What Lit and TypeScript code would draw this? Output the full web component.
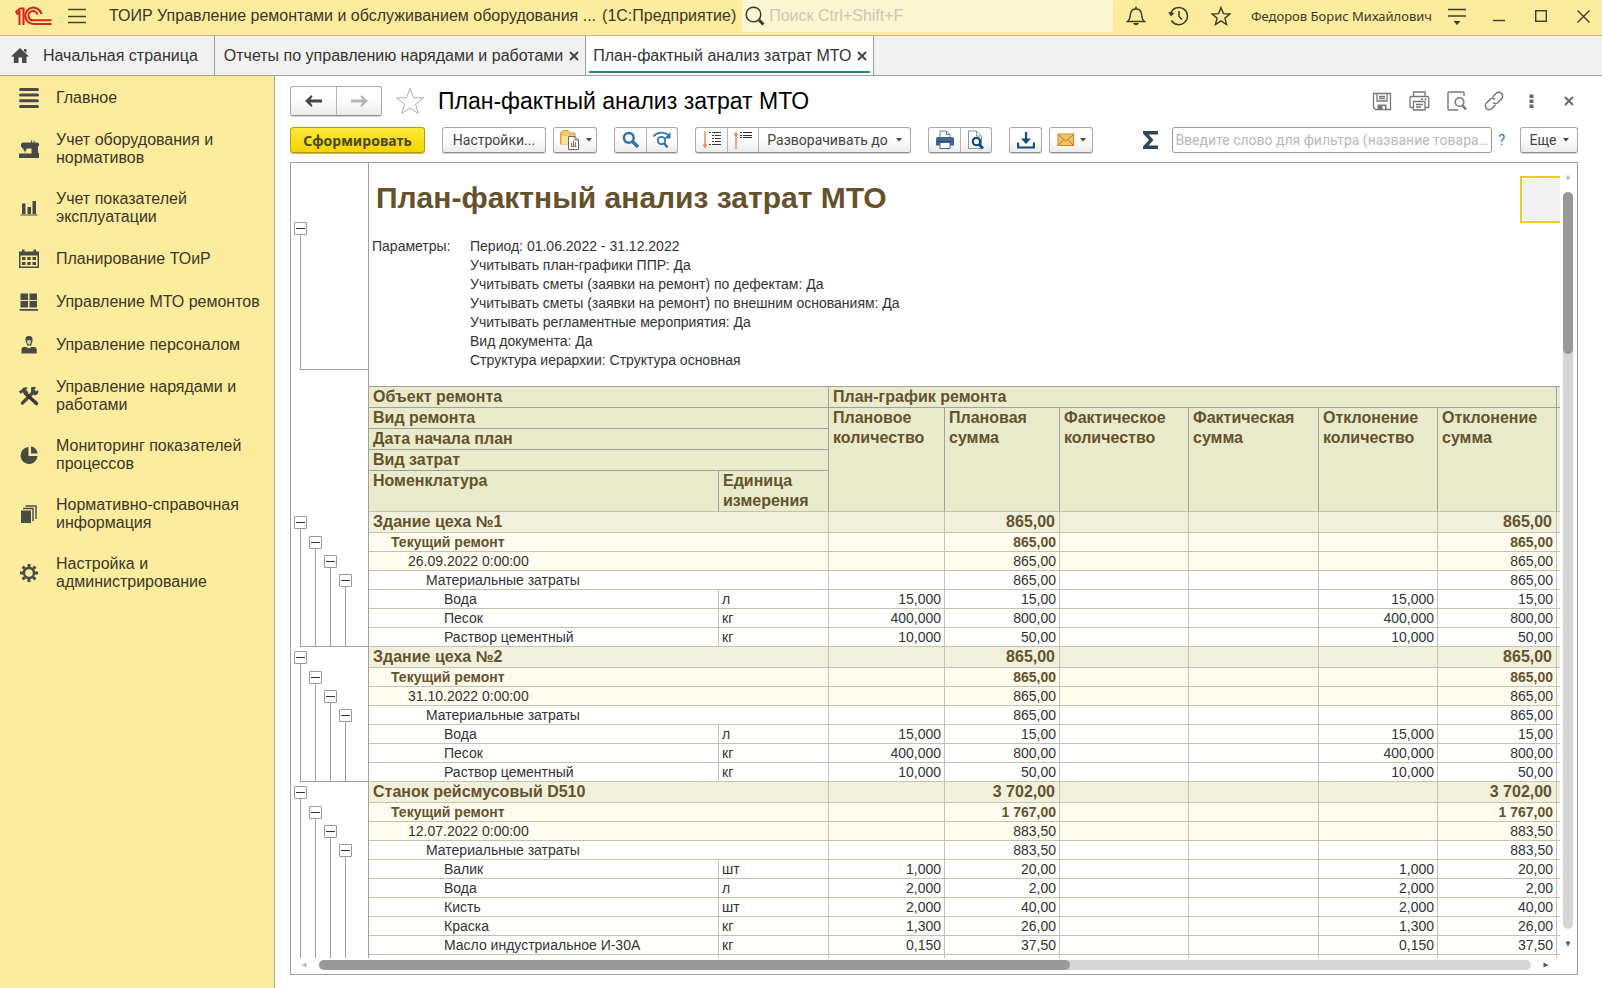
import { LitElement, html, css, svg, nothing, type TemplateResult } from "lit";
import { customElement, property } from "lit/decorators.js";
import { classMap } from "lit/directives/class-map.js";

type Row = { level: number; name: string; unit?: string; qty?: string; sum: string; last?: boolean };

const NAV: { icon: string; label: string }[] = [
  { icon: "main", label: "Главное" },
  { icon: "machine", label: "Учет оборудования и нормативов" },
  { icon: "bars", label: "Учет показателей эксплуатации" },
  { icon: "calendar", label: "Планирование ТОиР" },
  { icon: "blocks", label: "Управление МТО ремонтов" },
  { icon: "person", label: "Управление персоналом" },
  { icon: "tools", label: "Управление нарядами и работами" },
  { icon: "pie", label: "Мониторинг показателей процессов" },
  { icon: "books", label: "Нормативно-справочная информация" },
  { icon: "gear", label: "Настройка и администрирование" },
];

const PARAMS = [
  "Период: 01.06.2022 - 31.12.2022",
  "Учитывать план-графики ППР: Да",
  "Учитывать сметы (заявки на ремонт) по дефектам: Да",
  "Учитывать сметы (заявки на ремонт) по внешним основаниям: Да",
  "Учитывать регламентные мероприятия: Да",
  "Вид документа: Да",
  "Структура иерархии: Структура основная",
];

const MEASURES = [
  ["Плановое", "количество"],
  ["Плановая", "сумма"],
  ["Фактическое", "количество"],
  ["Фактическая", "сумма"],
  ["Отклонение", "количество"],
  ["Отклонение", "сумма"],
];

const building = (name: string, date: string): Row[] => [
  { level: 1, name, sum: "865,00" },
  { level: 2, name: "Текущий ремонт", sum: "865,00" },
  { level: 3, name: date, sum: "865,00" },
  { level: 4, name: "Материальные затраты", sum: "865,00" },
  { level: 5, name: "Вода", unit: "л", qty: "15,000", sum: "15,00" },
  { level: 5, name: "Песок", unit: "кг", qty: "400,000", sum: "800,00" },
  { level: 5, name: "Раствор цементный", unit: "кг", qty: "10,000", sum: "50,00", last: true },
];

const ROWS: Row[] = [
  ...building("Здание цеха №1", "26.09.2022 0:00:00"),
  ...building("Здание цеха №2", "31.10.2022 0:00:00"),
  { level: 1, name: "Станок рейсмусовый D510", sum: "3 702,00" },
  { level: 2, name: "Текущий ремонт", sum: "1 767,00" },
  { level: 3, name: "12.07.2022 0:00:00", sum: "883,50" },
  { level: 4, name: "Материальные затраты", sum: "883,50" },
  { level: 5, name: "Валик", unit: "шт", qty: "1,000", sum: "20,00" },
  { level: 5, name: "Вода", unit: "л", qty: "2,000", sum: "2,00" },
  { level: 5, name: "Кисть", unit: "шт", qty: "2,000", sum: "40,00" },
  { level: 5, name: "Краска", unit: "кг", qty: "1,300", sum: "26,00" },
  { level: 5, name: "Масло индустриальное И-30А", unit: "кг", qty: "0,150", sum: "37,50" },
  { level: 5, name: "", unit: " ", sum: "" },
];

const GLYPHS: Record<string, { w: number; h: number; body: TemplateResult }> = {
  logo: {
    w: 37, h: 20,
    body: svg`<g fill="none" stroke="#d8261c" stroke-width="2.100">
      <path d="M.500 6.500L5 2.500H8.500V19M1.500 8.500L4.500 6V19"/>
      <path d="M26.500 8A8.200 8.200 0 1 0 18.500 18H36.500"/>
      <path d="M22.500 8.500A4.600 4.600 0 1 0 18.500 14.300H36.500"/>
      </g>`,
  },
  burger: { w: 18, h: 16, body: svg`<path d="M0 1.500H18M0 8.500H18M0 14.500H18" stroke="#4b4528" stroke-width="1.400"/>` },
  find: {
    w: 20, h: 20,
    body: svg`<circle cx="8.500" cy="8.500" r="7.300" fill="none" stroke="#3f3a28" stroke-width="1.500"/><path d="M14 14L18.500 18.500" stroke="#3f3a28" stroke-width="3"/>`,
  },
  bell: {
    w: 20, h: 20,
    body: svg`<path d="M1.500 15.500C4.500 13.500 4 10 4.600 7.500C5.200 4.600 7.500 3 10 3S14.800 4.600 15.400 7.500C16 10 15.500 13.500 18.500 15.500Z" fill="none" stroke="#3f3a28" stroke-width="1.400"/><path d="M10 0.500V3" stroke="#3f3a28" stroke-width="1.600"/><path d="M7 17H13L11.500 19H8.500Z" fill="#3f3a28"/>`,
  },
  history: {
    w: 21, h: 20,
    body: svg`<path d="M2.800 7A8.600 8.600 0 1 1 3.500 14.500" fill="none" stroke="#3f3a28" stroke-width="1.500"/><path d="M0 6L6.500 7L3 10.500Z" fill="#3f3a28"/><path d="M11 5V10.500L14 13.500" fill="none" stroke="#3f3a28" stroke-width="1.500"/>`,
  },
  star: {
    w: 20, h: 20,
    body: svg`<path d="M10 1.500L12.400 7.600L19 8L13.900 12.100L15.600 18.500L10 14.900L4.400 18.500L6.100 12.100L1 8L7.600 7.600Z" fill="none" stroke="#3f3a28" stroke-width="1.400"/>`,
  },
  sortMenu: { w: 20, h: 17, body: svg`<path d="M1 1.500H19M1 8H19" stroke="#3f3a28" stroke-width="1.500"/><path d="M6.500 13H13.500L10 17Z" fill="#3f3a28"/>` },
  minimize: { w: 12, h: 12, body: svg`<path d="M0 10.500H12" stroke="#3f3a28" stroke-width="1.400"/>` },
  maximize: { w: 12, h: 12, body: svg`<rect x=".700" y=".700" width="10.600" height="10.600" fill="none" stroke="#3f3a28" stroke-width="1.400"/>` },
  closeWin: { w: 13, h: 13, body: svg`<path d="M.500 .500L12.500 12.500M12.500 .500L.500 12.500" stroke="#3f3a28" stroke-width="1.400"/>` },
  home: { w: 18, h: 15, body: svg`<path d="M9 0L18 8.500H15.500V15H11V9.500H7.500V15H2.800V8.500H0Z" fill="#4a4a4a"/><path d="M13 1H15.500V5L13 3Z" fill="#4a4a4a"/>` },
  cross: { w: 10, h: 10, body: svg`<path d="M1 1L9 9M9 1L1 9" stroke="#444" stroke-width="1.900"/>` },
  crossThin: { w: 10, h: 10, body: svg`<path d="M1 1L9 9M9 1L1 9" stroke="#666" stroke-width="1.800"/>` },
  back: { w: 18, h: 12, body: svg`<path d="M0 6L6.500 0L7.500 1.500L5.500 4.600H17V7.400H5.500L7.500 10.500L6.500 12Z" fill="#484848"/>` },
  forward: { w: 18, h: 12, body: svg`<path d="M18 6L11.500 0L10.500 1.500L12.500 4.600H1V7.400H12.500L10.500 10.500L11.500 12Z" fill="#b4b4b4"/>` },
  favorite: { w: 30, h: 28, body: svg`<path d="M15 1.500L18.400 10.600L28.500 11L20.500 17L23.300 26.500L15 21L6.700 26.500L9.500 17L1.500 11L11.600 10.600Z" fill="#fff" stroke="#a9aeb2"/>` },
  save: {
    w: 20, h: 19,
    body: svg`<g fill="none" stroke="#777" stroke-width="1.300"><path d="M2 1.500H18.500V17.500H3.500L1.500 15.500V1.500Z"/><path d="M5 2V9H15V2M7 4.500H13M7 6.500H13"/></g><path d="M5.500 12.500H14.500V17.500H5.500Z" fill="#777"/><path d="M10.500 14H13V17H10.500Z" fill="#fff"/>`,
  },
  print: {
    w: 21, h: 20,
    body: svg`<g fill="none" stroke="#777" stroke-width="1.300"><path d="M4.500 5.500V1H16V5.500M4.500 16.500H1.500Q1 16.500 1 15.500V7Q1 5.500 2.500 5.500H18Q19.800 5.500 19.800 7V15.500Q19.800 16.500 19 16.500H16"/><path d="M4.500 10.500H16V19H4.500ZM7 13.500H14M7 16H12"/></g><path d="M12 7.500H14V9H12ZM15.500 7.500H17.500V9H15.500Z" fill="#777"/>`,
  },
  preview: {
    w: 20, h: 20,
    body: svg`<path d="M17 5V2Q17 1 16 1H2Q1 1 1 2V18Q1 19 2 19H11" fill="none" stroke="#777" stroke-width="1.400"/><circle cx="12.500" cy="11" r="4.300" fill="none" stroke="#777" stroke-width="1.600"/><path d="M15.500 14.500L19 18.500" stroke="#777" stroke-width="2.600"/>`,
  },
  link: {
    w: 20, h: 20,
    body: svg`<g fill="none" stroke="#777" stroke-width="1.500" stroke-linecap="round"><path d="M9 5.500L12 2.500A3.700 3.700 0 0 1 17.500 8L14 11.500A3.600 3.600 0 0 1 9.500 12"/><path d="M11 14.500L8 17.500A3.700 3.700 0 0 1 2.500 12L6 8.500A3.600 3.600 0 0 1 10.500 8"/></g>`,
  },
  dots: { w: 5, h: 15, body: svg`<path d="M.500 .500H4.500V4H.500ZM.500 5.500H4.500V9H.500ZM.500 10.500H4.500V14H.500Z" fill="#6a6a6a"/>` },
  folder: {
    w: 22, h: 22,
    body: svg`<path d="M1.500 6V4L4 1.500H9L11 4H16V15H1.500Z" fill="#f4c667" stroke="#d9a03c"/><path d="M3 7H15V15H3Z" fill="#fbe09a"/><path d="M9.500 7.500H16L19.500 11V20.500H9.500Z" fill="#fff" stroke="#666"/><path d="M16 7.500V11H19.500" fill="none" stroke="#666"/><path d="M12.500 17V14M14.500 17V11.500" stroke="#cf4a3c"/><path d="M12 17.500H17.500M16.500 17V13" stroke="#777"/>`,
  },
  search: { w: 18, h: 18, body: svg`<circle cx="6.800" cy="6.800" r="4.900" fill="none" stroke="#2c74a8" stroke-width="2.500"/><path d="M10.500 10.500L16 16" stroke="#2c74a8" stroke-width="3.400"/>` },
  searchNext: {
    w: 20, h: 18,
    body: svg`<circle cx="9.500" cy="9.500" r="3.700" fill="none" stroke="#2c74a8" stroke-width="1.800"/><path d="M12 12L15.500 16.500" stroke="#2c74a8" stroke-width="2.400"/><path d="M1.500 5.500C5 .800 12 .500 16.500 4" fill="none" stroke="#2c74a8" stroke-width="1.900"/><path d="M18.500 1V7.500H12.500Z" fill="#2c74a8"/>`,
  },
  expand: {
    w: 20, h: 20,
    body: svg`<path d="M3 1V17" stroke="#e8834f" stroke-width="1.400"/><path d="M.500 14.500H5.500L3 18.500Z" fill="#e8834f"/><path d="M7 2.500H9M10 2.500H19M10 5.500H12M13 5.500H19M10 8.500H12M13 8.500H19M10 11.500H12M13 11.500H19M7 14.500H9M10 14.500H19" stroke="#3a3a3a"/>`,
  },
  collapse: {
    w: 20, h: 20,
    body: svg`<path d="M3 3V19" stroke="#e8834f" stroke-width="1.400"/><path d="M.500 5.500H5.500L3 1.500Z" fill="#e8834f"/><path d="M7 2.500H9M10 2.500H19M7 5.500H9M10 5.500H19M7 7.500H9M10 7.500H19" stroke="#2a2a2a" stroke-width="1.200"/>`,
  },
  printer: {
    w: 20, h: 20,
    body: svg`<path d="M5 7V1H11.500L15 4.500V7" fill="#fff" stroke="#6a7f92"/><path d="M11.500 1V4.500H15" fill="none" stroke="#6a7f92"/><path d="M3 7H17Q19 7 19 9V15.500H1V9Q1 7 3 7Z" fill="#406890"/><path d="M2 11.500H18" stroke="#27496b"/><path d="M5 12.500H15V18.500H5Z" fill="#fff" stroke="#406890"/>`,
  },
  pageFind: {
    w: 18, h: 20,
    body: svg`<path d="M1.500 1H9.500L14.500 6V18.500H1.500Z" fill="#fff" stroke="#8297a8"/><path d="M9.500 1V6H14.500" fill="none" stroke="#8297a8"/><circle cx="9.500" cy="11.500" r="3.700" fill="#fff" stroke="#0d4f78" stroke-width="2.200"/><path d="M12 14.500L16 18.500" stroke="#0d4f78" stroke-width="3"/>`,
  },
  download: { w: 18, h: 17, body: svg`<path d="M9 0V9" stroke="#0d4f78" stroke-width="2.200"/><path d="M4 6.500H14L9 12Z" fill="#0d4f78"/><path d="M1 10.500V15.500H17V10.500" fill="none" stroke="#0d4f78" stroke-width="2.200"/>` },
  mail: { w: 18, h: 14, body: svg`<rect x="1" y="1" width="15.500" height="11.500" fill="#f6c264" stroke="#c98a2a"/><path d="M1 1.500L8.800 8L16.500 1.500M1 12.500L6.500 6.500M16.500 12.500L11 6.500" fill="none" stroke="#c07c22"/>` },
  sigma: { w: 15, h: 18, body: svg`<path d="M0 0H15V3.500H5.500L10.500 9L5.500 14.500H15V18H0V15.500L6 9L0 2.500Z" fill="#2d4858"/>` },
  caret: { w: 6, h: 4, body: svg`<path d="M0 0H6L3 3.500Z" fill="#444"/>` },
  up: { w: 6, h: 6, body: svg`<path d="M3 .500L5.500 5.500H.500Z" fill="#bbb"/>` },
  down: { w: 6, h: 6, body: svg`<path d="M3 5.500L.500 .500H5.500Z" fill="#555"/>` },
  left: { w: 6, h: 6, body: svg`<path d="M.500 3L5.500 .500V5.500Z" fill="#bbb"/>` },
  right: { w: 6, h: 6, body: svg`<path d="M5.500 3L.500 .500V5.500Z" fill="#555"/>` },
  minus: { w: 9, h: 9, body: svg`<path d="M0 4.500H9" stroke="#333"/>` },
  main: { w: 20, h: 20, body: svg`<path d="M1.500 1.500H18.500M1.500 7H18.500M1.500 12.800H18.500M1.500 18.500H18.500" stroke="#4a4a44" stroke-width="3" stroke-linecap="round"/>` },
  machine: {
    w: 20, h: 20,
    body: svg`<path d="M4 3.500H12V1.500H13V3.500H14.500V1.500H15.500V3.500H18Q20 3.500 20 5V7H19V14H20V19H0V14.500H12.500V9.500H7.500V11.500H6.500V13.500H5.500V11.500H4.500V9.500H3V8H2V5.500Q2 3.500 4 3.500Z" fill="#4a4a44"/>`,
  },
  bars: { w: 20, h: 20, body: svg`<path d="M3 5.500H6.500V16H3ZM8.500 9H12V16H8.500ZM13.500 3H17V16H13.500ZM1.500 16.500H18.500V17.500H1.500Z" fill="#4a4a44"/>` },
  calendar: {
    w: 20, h: 20,
    body: svg`<path d="M0 2.500H20V19H0Z" fill="#4a4a44"/><path d="M3 .500H5.500V3H3ZM14.500 .500H17V3H14.500Z" fill="#4a4a44"/><path d="M1.500 6.500H18.500V17.500H1.500Z" fill="#fcec9e"/><path d="M3 8H6.500V11H3ZM8.300 8H11.700V11H8.300ZM13.500 8H17V11H13.500ZM3 13H6.500V16H3ZM8.300 13H11.700V16H8.300ZM13.500 13H17V16H13.500Z" fill="#4a4a44"/>`,
  },
  blocks: { w: 20, h: 20, body: svg`<path d="M1.500 1.500H9V8H1.500ZM10.500 1.500H18V8H10.500ZM1.500 9H9V15.500H1.500ZM10.500 9H18V15.500H10.500ZM.500 17H19V18.800H.500Z" fill="#4a4a44"/>` },
  person: {
    w: 20, h: 20,
    body: svg`<path d="M6.500 5Q6 1 10 1T13.500 5Q13.500 7.500 12.500 9V10.500L8 10.500V9Q6.500 7.500 6.500 5Z" fill="#4a4a44"/><path d="M2.500 18.500V14.500Q2.500 12 5 12H7.500L10 13.500L12.500 12H15.500Q17.800 12 17.800 14.500V18.500Z" fill="#4a4a44"/><path d="M8 5.500Q10 4.500 12 5.500Q12 9.500 10 9.500T8 5.500Z" fill="#d9cc94"/>`,
  },
  tools: {
    w: 20, h: 20,
    body: svg`<path d="M3.500 17L15 5.500" stroke="#4a4a44" stroke-width="3.400" stroke-linecap="round"/><path d="M12 1.500Q16 0 17 2L14.500 4.500L16 6L19 4Q20 8 17 9T12 6Z" fill="#4a4a44"/><path d="M6 7L17.500 17.500" stroke="#3a352c" stroke-width="3.400" stroke-linecap="round"/><path d="M0 5Q2.500 4.500 3.500 2.500Q6 .500 9 2L7 3.500L9.500 6.500L6.500 9L4.500 6.500Q2.500 6 1.500 8Z" fill="#4a4a44"/>`,
  },
  pie: { w: 20, h: 20, body: svg`<path d="M9.500 2A8.500 8.500 0 1 0 18.500 11H9.500Z" fill="#4a4a44"/><path d="M12 1.500A8 8 0 0 1 18.500 8.500H12Z" fill="#4a4a44"/>` },
  books: { w: 20, h: 20, body: svg`<path d="M2 6.500H12V19H2Z" fill="#4a4a44"/><path d="M4 4.500H14V17M6.500 2H17V15" fill="none" stroke="#4a4a44" stroke-width="1.400"/>` },
  gear: {
    w: 20, h: 20,
    body: svg`<circle cx="10" cy="10" r="5" fill="none" stroke="#4a4a44" stroke-width="2.400"/><path d="M10 1V4M10 16V19M1 10H4M16 10H19M3.600 3.600L5.800 5.800M14.200 14.200L16.400 16.400M16.400 3.600L14.200 5.800M5.800 14.200L3.600 16.400" stroke="#4a4a44" stroke-width="3"/>`,
  },
};

const icon = (name: string) => {
  const g = GLYPHS[name];
  return html`<svg width=${g.w} height=${g.h} viewBox="0 0 ${g.w} ${g.h}" aria-hidden="true">${g.body}</svg>`;
};

const base = css`
  :host, * { box-sizing: border-box; }
  svg { display: block; flex: none; }
  button { margin: 0; padding: 0; border: 0; background: none; font: inherit; color: inherit; display: flex; align-items: center; justify-content: center; cursor: pointer; }
  a { color: inherit; text-decoration: none; }
`;

@customElement("title-bar")
class TitleBar extends LitElement {
  static styles = [base, css`
    :host { display: flex; align-items: center; height: 36px; padding: 0 12px 3px 15px; background: #fcec9e; border-bottom: 1px solid #c9b96c; font-size: 16px; color: #3b3726; white-space: nowrap; }
    .burger { margin: 0 23px 0 16px; }
    .title { margin-right: 6px; }
    .search { flex: 1; align-self: stretch; display: flex; align-items: center; gap: 2px; padding: 0 3px; background: #fdf6d2; border-radius: 0 0 3px 3px; min-width: 0; }
    .search input { flex: 1; min-width: 0; border: 0; padding: 0 2px; background: none; font: inherit; outline: none; }
    .search input::placeholder { color: #cfc8b4; opacity: 1; }
    .tools { display: flex; align-items: center; gap: 22px; padding: 0 20px 0 13px; }
    .user { font-family: "Noto Sans", sans-serif; font-size: 13px; }
    .window { display: flex; align-items: center; gap: 30px; padding-left: 26px; }
    .menu { margin-left: 15px; }
  `];

  render() {
    return html`
      ${icon("logo")}
      <button class="burger" aria-label="Меню">${icon("burger")}</button>
      <span class="title">ТОИР Управление ремонтами и обслуживанием оборудования ...</span>
      <span class="title">(1С:Предприятие)</span>
      <label class="search">${icon("find")}<input type="search" aria-label="Поиск" placeholder="Поиск Ctrl+Shift+F" /></label>
      <div class="tools">
        <button aria-label="Уведомления">${icon("bell")}</button>
        <button aria-label="История">${icon("history")}</button>
        <button aria-label="Избранное">${icon("star")}</button>
      </div>
      <a class="user" href="#user">Федоров Борис Михайлович</a>
      <button class="menu" aria-label="Настройки окна">${icon("sortMenu")}</button>
      <div class="window">
        <button aria-label="Свернуть">${icon("minimize")}</button>
        <button aria-label="Развернуть">${icon("maximize")}</button>
        <button aria-label="Закрыть">${icon("closeWin")}</button>
      </div>
    `;
  }
}

@customElement("tab-strip")
class TabStrip extends LitElement {
  static styles = [base, css`
    :host { display: flex; height: 40px; background: #f1f1f1; border-bottom: 1px solid #a0a0a0; font-size: 16px; color: #333; white-space: nowrap; }
    .tab { display: flex; align-items: center; gap: 6px; padding: 0 6px 0 9px; border-right: 1px solid #a0a0a0; }
    .home { gap: 14px; padding: 0 16px 0 11px; }
    .active { background: #fff; padding: 0 3px; }
    .inner { display: flex; align-items: center; gap: 6px; align-self: stretch; padding: 4px 3px 0 4px; margin-bottom: 2px; border-bottom: 2px solid #1d9060; }
  `];

  render() {
    return html`
      <a class="tab home" href="#home">${icon("home")}<span>Начальная страница</span></a>
      <div class="tab">
        <a href="#reports">Отчеты по управлению нарядами и работами</a>
        <button aria-label="Закрыть вкладку">${icon("cross")}</button>
      </div>
      <div class="tab active">
        <div class="inner">
          <a href="#plan">План-фактный анализ затрат МТО</a>
          <button aria-label="Закрыть вкладку">${icon("cross")}</button>
        </div>
      </div>
    `;
  }
}

@customElement("side-nav")
class SideNav extends LitElement {
  static styles = [base, css`
    :host { display: block; background: #fcec9e; border-right: 1px solid #b5ad80; font-size: 16px; line-height: 18px; color: #3b3726; }
    nav { display: flex; flex-direction: column; gap: 23px; padding: 12px 4px 12px 19px; }
    a { display: flex; align-items: center; gap: 17px; min-height: 20px; }
    span { max-width: 208px; }
  `];

  render() {
    return html`<nav>${NAV.map((n) => html`<a href="#${n.icon}">${icon(n.icon)}<span>${n.label}</span></a>`)}</nav>`;
  }
}

@customElement("report-header")
class ReportHeader extends LitElement {
  static styles = [base, css`
    :host { display: flex; flex-direction: column; gap: 11px; }
    .row { display: flex; align-items: center; }
    .head { height: 30px; }
    .group { display: flex; border: 1px solid #a9a9a9; border-bottom-color: #8f8f8f; border-radius: 3px; background: linear-gradient(#fff 40%, #ececec); box-shadow: 0 1px 0 #d0d0d0; height: 26px; }
    .group button { width: 31px; }
    .group button + button { border-left: 1px solid #b5b5b5; }
    .head .group { height: 30px; }
    .head .group button { width: 45px; }
    h1 { margin: 0; font-size: 23px; line-height: 28px; font-weight: 400; color: #000; flex: 1; white-space: nowrap; }
    .fav { margin: 0 13px; }
    .tools { display: flex; align-items: center; gap: 17px; padding-right: 4px; }
    .tools .far { margin: 0 13px 0 8px; }
    .bar { font-family: "Roboto", sans-serif; font-size: 14px; color: #444; white-space: nowrap; }
    .bar .group button.drop { width: 42px; gap: 5px; }
    .bar .group button.more { width: 56px; gap: 6px; }
    .bar .group button.wide { width: 102px; }
    .bar .group button.reach { width: 152px; gap: 8px; }
    .run { width: 135px; height: 26px; border: 1px solid #b59a10; border-radius: 3px; background: linear-gradient(#ffe93a, #f2d500); font-family: "Noto Sans", sans-serif; font-weight: 700; color: #4c4718; box-shadow: 0 1px 0 #c9b860; }
    .g17 { margin-left: 17px; }
    .g7 { margin-left: 7px; }
    .filter { display: flex; align-items: center; gap: 14px; margin-left: auto; }
    .filter input { width: 320px; height: 26px; border: 1px solid #999; border-radius: 3px; padding: 0 2px; font: inherit; text-overflow: ellipsis; outline: none; }
    .filter input::placeholder { color: #b9b9b9; opacity: 1; }
    .help { color: #1478c0; margin: 0 15px 0 6px; }
  `];

  render() {
    return html`
      <div class="row head">
        <div class="group">
          <button aria-label="Назад">${icon("back")}</button>
          <button aria-label="Вперед">${icon("forward")}</button>
        </div>
        <button class="fav" aria-label="В избранное">${icon("favorite")}</button>
        <h1>План-фактный анализ затрат МТО</h1>
        <div class="tools">
          <button aria-label="Сохранить">${icon("save")}</button>
          <button aria-label="Печать">${icon("print")}</button>
          <button aria-label="Предварительный просмотр">${icon("preview")}</button>
          <button aria-label="Ссылка">${icon("link")}</button>
          <button class="far" aria-label="Еще">${icon("dots")}</button>
          <button aria-label="Закрыть">${icon("crossThin")}</button>
        </div>
      </div>
      <div class="row bar">
        <button class="run">Сформировать</button>
        <div class="group g17"><button class="wide">Настройки...</button></div>
        <div class="group g7"><button class="drop" aria-label="Варианты">${icon("folder")}${icon("caret")}</button></div>
        <div class="group g17">
          <button aria-label="Найти">${icon("search")}</button>
          <button aria-label="Найти далее">${icon("searchNext")}</button>
        </div>
        <div class="group g17">
          <button aria-label="Развернуть">${icon("expand")}</button>
          <button aria-label="Свернуть">${icon("collapse")}</button>
          <button class="reach">Разворачивать до${icon("caret")}</button>
        </div>
        <div class="group g17">
          <button aria-label="Печать">${icon("printer")}</button>
          <button aria-label="Просмотр">${icon("pageFind")}</button>
        </div>
        <div class="group g17"><button aria-label="Сохранить в файл">${icon("download")}</button></div>
        <div class="group g7"><button class="drop" aria-label="Отправить">${icon("mail")}${icon("caret")}</button></div>
        <label class="filter">${icon("sigma")}<input type="text" aria-label="Фильтр" placeholder="Введите слово для фильтра (название товара..." /></label>
        <a class="help" href="#help">?</a>
        <div class="group"><button class="more">Еще${icon("caret")}</button></div>
      </div>
    `;
  }
}

@customElement("report-sheet")
class ReportSheet extends LitElement {
  @property({ attribute: false }) rows: Row[] = ROWS;

  static styles = [base, css`
    :host { display: grid; grid-template-columns: minmax(0, 1fr) 17px; grid-template-rows: minmax(0, 1fr) 16px; border: 1px solid #a0a0a0; background: #fff; min-height: 0; color: #333; font-size: 14px; line-height: 18px; }
    .pane { overflow: hidden; min-height: 0; position: relative; display: flex; flex-direction: column; }
    .intro { display: flex; flex: none; }
    .gutter { width: 78px; flex: none; border-right: 1px solid #a0a0a0; padding: 59px 0 16px 3px; }
    .gutter .bracket { height: 148px; margin-left: 6px; border-left: 1px solid #a0a0a0; border-bottom: 1px solid #a0a0a0; }
    .toggle { width: 13px; height: 13px; border: 1px solid #999; border-radius: 1px; background: #fff; }
    .bracket .toggle { margin-left: -7px; }
    .intro h2 { margin: 0; padding: 18px 0 22px 7px; font-size: 30px; line-height: 34px; color: #65522c; white-space: nowrap; }
    .params { display: grid; grid-template-columns: 98px auto; padding-left: 3px; line-height: 19px; white-space: nowrap; }
    .params p { margin: 0; }
    .selection { position: absolute; top: 13px; right: 0; width: 40px; height: 47px; border: 2px solid #ecca2c; border-right: 0; background: #f0f0f0; box-shadow: inset 1px 1px 0 #fff, inset 0 -1px 0 #fff; }

    table { flex: none; width: 100%; table-layout: fixed; border-collapse: separate; border-spacing: 0; }
    col.c-tree { width: 78px; } col.c-name { width: 350px; } col.c-unit { width: 110px; }
    col.c0 { width: 116px; } col.c1 { width: 115px; } col.c2 { width: 129px; } col.c3 { width: 130px; } col.c4, col.c5 { width: 119px; }
    th, td { padding: 0 3px; border: 0 solid #c5c2ae; border-right-width: 1px; border-bottom-width: 1px; text-align: left; white-space: nowrap; vertical-align: top; font-weight: 400; }
    tbody tr { height: 19px; }
    thead th { background: #eaebcc; border-color: #a0a0a0; color: #65522c; font-size: 16px; font-weight: 700; line-height: 20px; padding: 0 4px; }
    thead tr:first-child th { border-top: 1px solid #a0a0a0; }
    thead .low { border-bottom-color: #c5c2ae; }
    th.tail, td.tail { border-right: 0; padding: 0; }
    .tree { padding: 0 0 0 2px; border-right-color: #a0a0a0; border-bottom: 0; }
    .slots { display: flex; height: 19px; }
    .slots.end { border-bottom: 1px solid #a0a0a0; margin-left: 7px; }
    .slots.end .slot:first-child { width: 8px; background-position: 0 0; }
    .slot { width: 15px; display: flex; align-items: center; justify-content: center; }
    .slot.line { background: linear-gradient(#a0a0a0, #a0a0a0) 7px 0 / 1px 100% no-repeat; }
    .slot.node { background: linear-gradient(#a0a0a0, #a0a0a0) 7px 100% / 1px 50% no-repeat; }
    .l1 td, .l1 th { background: #f1f0dc; color: #65522c; font-weight: 700; font-size: 16px; line-height: 20px; padding-left: 4px; padding-right: 4px; }
    .l1 .slots { height: 21px; }
    .l2 td, .l2 th { background: #fffbee; color: #65522c; font-weight: 700; }
    .l2 th { padding-left: 22px; }
    .l3 td, .l3 th { background: #fffbee; }
    .l3 th { padding-left: 39px; }
    .l4 th { padding-left: 57px; }
    .l5 th { padding-left: 75px; }
    tbody td.tree { background: #fff; padding: 0 0 0 2px; }
    td.num { text-align: right; }
    .vbar, .hbar { display: flex; align-items: center; background: #fff; }
    .vbar { flex-direction: column; gap: 12px; padding: 11px 2px 11px 0; }
    .vbar .track { width: 10px; flex: 1; border-radius: 5px; background: #d6d6d6; }
    .vbar .thumb { height: 22%; border-radius: 5px; background: #999; }
    .hbar { gap: 12px; padding: 0 11px 2px 10px; }
    .hbar .track { height: 10px; flex: 1; border-radius: 5px; background: #d6d6d6; }
    .hbar .thumb { width: 62%; height: 10px; border-radius: 5px; background: #999; }
  `];

  private tree(row: Row) {
    return html`<td class="tree"><div class=${classMap({ slots: true, end: !!row.last })}>
      ${[1, 2, 3, 4].map((n) =>
        n === row.level
          ? html`<div class="slot node"><button class="toggle" aria-label="Свернуть группу">${icon("minus")}</button></div>`
          : html`<div class=${classMap({ slot: true, line: n < row.level })}></div>`)}
    </div></td>`;
  }

  private row(r: Row) {
    const values = [r.qty, r.sum, "", "", r.qty, r.sum];
    return html`<tr class="l${r.level}">
      ${this.tree(r)}
      <th scope="row" colspan=${r.unit ? 1 : 2}>${r.name}</th>
      ${r.unit ? html`<td>${r.unit}</td>` : nothing}
      ${values.map((v) => html`<td class="num">${v ?? ""}</td>`)}
      <td class="tail"></td>
    </tr>`;
  }

  render() {
    return html`
      <div class="pane">
        <div class="intro">
          <div class="gutter"><div class="bracket"><button class="toggle" aria-label="Свернуть группу">${icon("minus")}</button></div></div>
          <div>
            <h2>План-фактный анализ затрат МТО</h2>
            <div class="params"><span>Параметры:</span><div>${PARAMS.map((p) => html`<p>${p}</p>`)}</div></div>
          </div>
        </div>
        <div class="selection"></div>
        <table>
          <colgroup>
            <col class="c-tree" /><col class="c-name" /><col class="c-unit" />
            ${MEASURES.map((_, i) => html`<col class="c${i}" />`)}<col />
          </colgroup>
          <thead>
            <tr><td class="tree" rowspan="5"></td><th colspan="2">Объект ремонта</th><th colspan="6">План-график ремонта</th><th class="tail"></th></tr>
            <tr><th colspan="2">Вид ремонта</th>${MEASURES.map((m) => html`<th class="low" rowspan="4">${m[0]}<br />${m[1]}</th>`)}<th class="tail low" rowspan="4"></th></tr>
            <tr><th colspan="2">Дата начала план</th></tr>
            <tr><th colspan="2">Вид затрат</th></tr>
            <tr><th class="low">Номенклатура</th><th class="low">Единица<br />измерения</th></tr>
          </thead>
          <tbody>${this.rows.map((r) => this.row(r))}</tbody>
        </table>
      </div>
      <div class="vbar">
        <button aria-label="Вверх">${icon("up")}</button>
        <div class="track"><div class="thumb"></div></div>
        <button aria-label="Вниз">${icon("down")}</button>
      </div>
      <div class="hbar">
        <button aria-label="Влево">${icon("left")}</button>
        <div class="track"><div class="thumb"></div></div>
        <button aria-label="Вправо">${icon("right")}</button>
      </div>
    `;
  }
}

@customElement("app-root")
class AppRoot extends LitElement {
  static styles = css`
    :host { display: flex; flex-direction: column; height: 100vh; overflow: hidden; background: #fff; font-family: "Liberation Sans", Arial, sans-serif; }
    .body { flex: 1; min-height: 0; display: grid; grid-template-columns: 275px minmax(0, 1fr); }
    main { display: flex; flex-direction: column; gap: 9px; min-height: 0; padding: 10px 24px 13px 15px; }
    report-sheet { flex: 1; }
  `;

  render() {
    return html`
      <title-bar></title-bar>
      <tab-strip></tab-strip>
      <div class="body">
        <side-nav></side-nav>
        <main>
          <report-header></report-header>
          <report-sheet></report-sheet>
        </main>
      </div>
    `;
  }
}
